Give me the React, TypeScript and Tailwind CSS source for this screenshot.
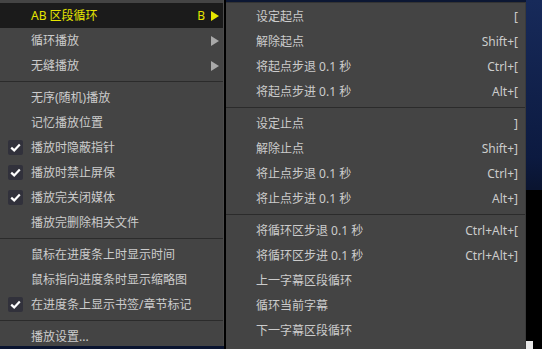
import React from 'react'

type Item =
  | { kind: 'item'; label: string; checked?: boolean; arrow?: boolean }
  | { kind: 'sep' }

const mainItems: Item[] = [
  { kind: 'item', label: '循环播放', arrow: true },
  { kind: 'item', label: '无缝播放', arrow: true },
  { kind: 'sep' },
  { kind: 'item', label: '无序(随机)播放' },
  { kind: 'item', label: '记忆播放位置' },
  { kind: 'item', label: '播放时隐蔽指针', checked: true },
  { kind: 'item', label: '播放时禁止屏保', checked: true },
  { kind: 'item', label: '播放完关闭媒体', checked: true },
  { kind: 'item', label: '播放完删除相关文件' },
  { kind: 'sep' },
  { kind: 'item', label: '鼠标在进度条上时显示时间' },
  { kind: 'item', label: '鼠标指向进度条时显示缩略图' },
  { kind: 'item', label: '在进度条上显示书签/章节标记', checked: true },
  { kind: 'sep' },
  { kind: 'item', label: '播放设置...' },
]

type SubItem = { label: string; key?: string } | null

const subItems: SubItem[] = [
  { label: '设定起点', key: '[' },
  { label: '解除起点', key: 'Shift+[' },
  { label: '将起点步退 0.1 秒', key: 'Ctrl+[' },
  { label: '将起点步进 0.1 秒', key: 'Alt+[' },
  null,
  { label: '设定止点', key: ']' },
  { label: '解除止点', key: 'Shift+]' },
  { label: '将止点步退 0.1 秒', key: 'Ctrl+]' },
  { label: '将止点步进 0.1 秒', key: 'Alt+]' },
  null,
  { label: '将循环区步退 0.1 秒', key: 'Ctrl+Alt+[' },
  { label: '将循环区步进 0.1 秒', key: 'Ctrl+Alt+]' },
  { label: '上一字幕区段循环' },
  { label: '循环当前字幕' },
  { label: '下一字幕区段循环' },
]

function Arrow({ color }: { color: string }) {
  return (
    <svg width="8" height="10" viewBox="0 0 8 10" className="shrink-0">
      <polygon points="0,0 8,5 0,10" fill={color} />
    </svg>
  )
}

function Check() {
  return (
    <span className="w-[15px] h-[15px] rounded-[2px] bg-[#31313b] flex items-center justify-center">
      <svg width="11" height="9" viewBox="0 0 11 9">
        <path d="M1.2 4.6 L4.2 7.4 L9.8 1.4" fill="none" stroke="#ffffff" strokeWidth="2.2" />
      </svg>
    </span>
  )
}

function Separator() {
  return (
    <div className="h-[7px] flex items-center">
      <div className="w-full h-px bg-[#2b2b2b]" />
    </div>
  )
}

export default function App() {
  return (
    <div
      className="w-[542px] h-[349px] flex overflow-hidden bg-[linear-gradient(180deg,#172a5a_0%,#0c1a40_45%,#0a1430_54%)] text-[12px] leading-none"
      style={{ fontFamily: "'Noto Sans', 'Noto Sans CJK SC', sans-serif" }}
    >
      {/* Main menu */}
      <div className="w-[224px] h-[346px] shrink-0 bg-[#444444] pt-[3px] overflow-hidden border-r border-[#4c4c4c]">
        <div className="h-[25px] bg-[#1b1b1b] flex items-center pl-[31px] pr-[4px] text-[#e6e600]">
          <span>AB 区段循环</span>
          <span className="ml-auto mr-[6px]">B</span>
          <Arrow color="#e6e600" />
        </div>
        {mainItems.map((item, i) =>
          item.kind === 'sep' ? (
            <Separator key={i} />
          ) : (
            <div key={i} className="relative h-[25px] flex items-center pl-[31px] pr-[4px] text-[#cccccc]">
              {item.checked && (
                <span className="absolute left-[8px] top-[5px]">
                  <Check />
                </span>
              )}
              <span>{item.label}</span>
              {item.arrow && (
                <span className="ml-auto">
                  <Arrow color="#a9a9a9" />
                </span>
              )}
            </div>
          )
        )}
      </div>
      <div className="w-[2px] shrink-0 bg-black h-full" />

      {/* Sub menu */}
      <div className="w-[300px] shrink-0 flex flex-col">
        <div className="h-[2px] bg-[#0c1733]" />
        <div className="flex-1 bg-[#444444] border-t border-[#333333] border-r border-r-[#3a3a3a] pt-[1px]">
          {subItems.map((s, i) =>
            s === null ? (
              <Separator key={i} />
            ) : (
              <div key={i} className="h-[25px] flex items-center pl-[30px] pr-[7px] text-[#cccccc]">
                <span>{s.label}</span>
                {s.key && <span className="ml-auto">{s.key}</span>}
              </div>
            )
          )}
        </div>
      </div>

      {/* Desktop strip */}
      <div className="flex-1 flex flex-col">
        <div className="h-[190px]" />
        <div className="flex-1 bg-black flex flex-col justify-end">
          <div className="w-[7px] h-[8px] bg-[#e8e8e8]" />
        </div>
      </div>
    </div>
  )
}
